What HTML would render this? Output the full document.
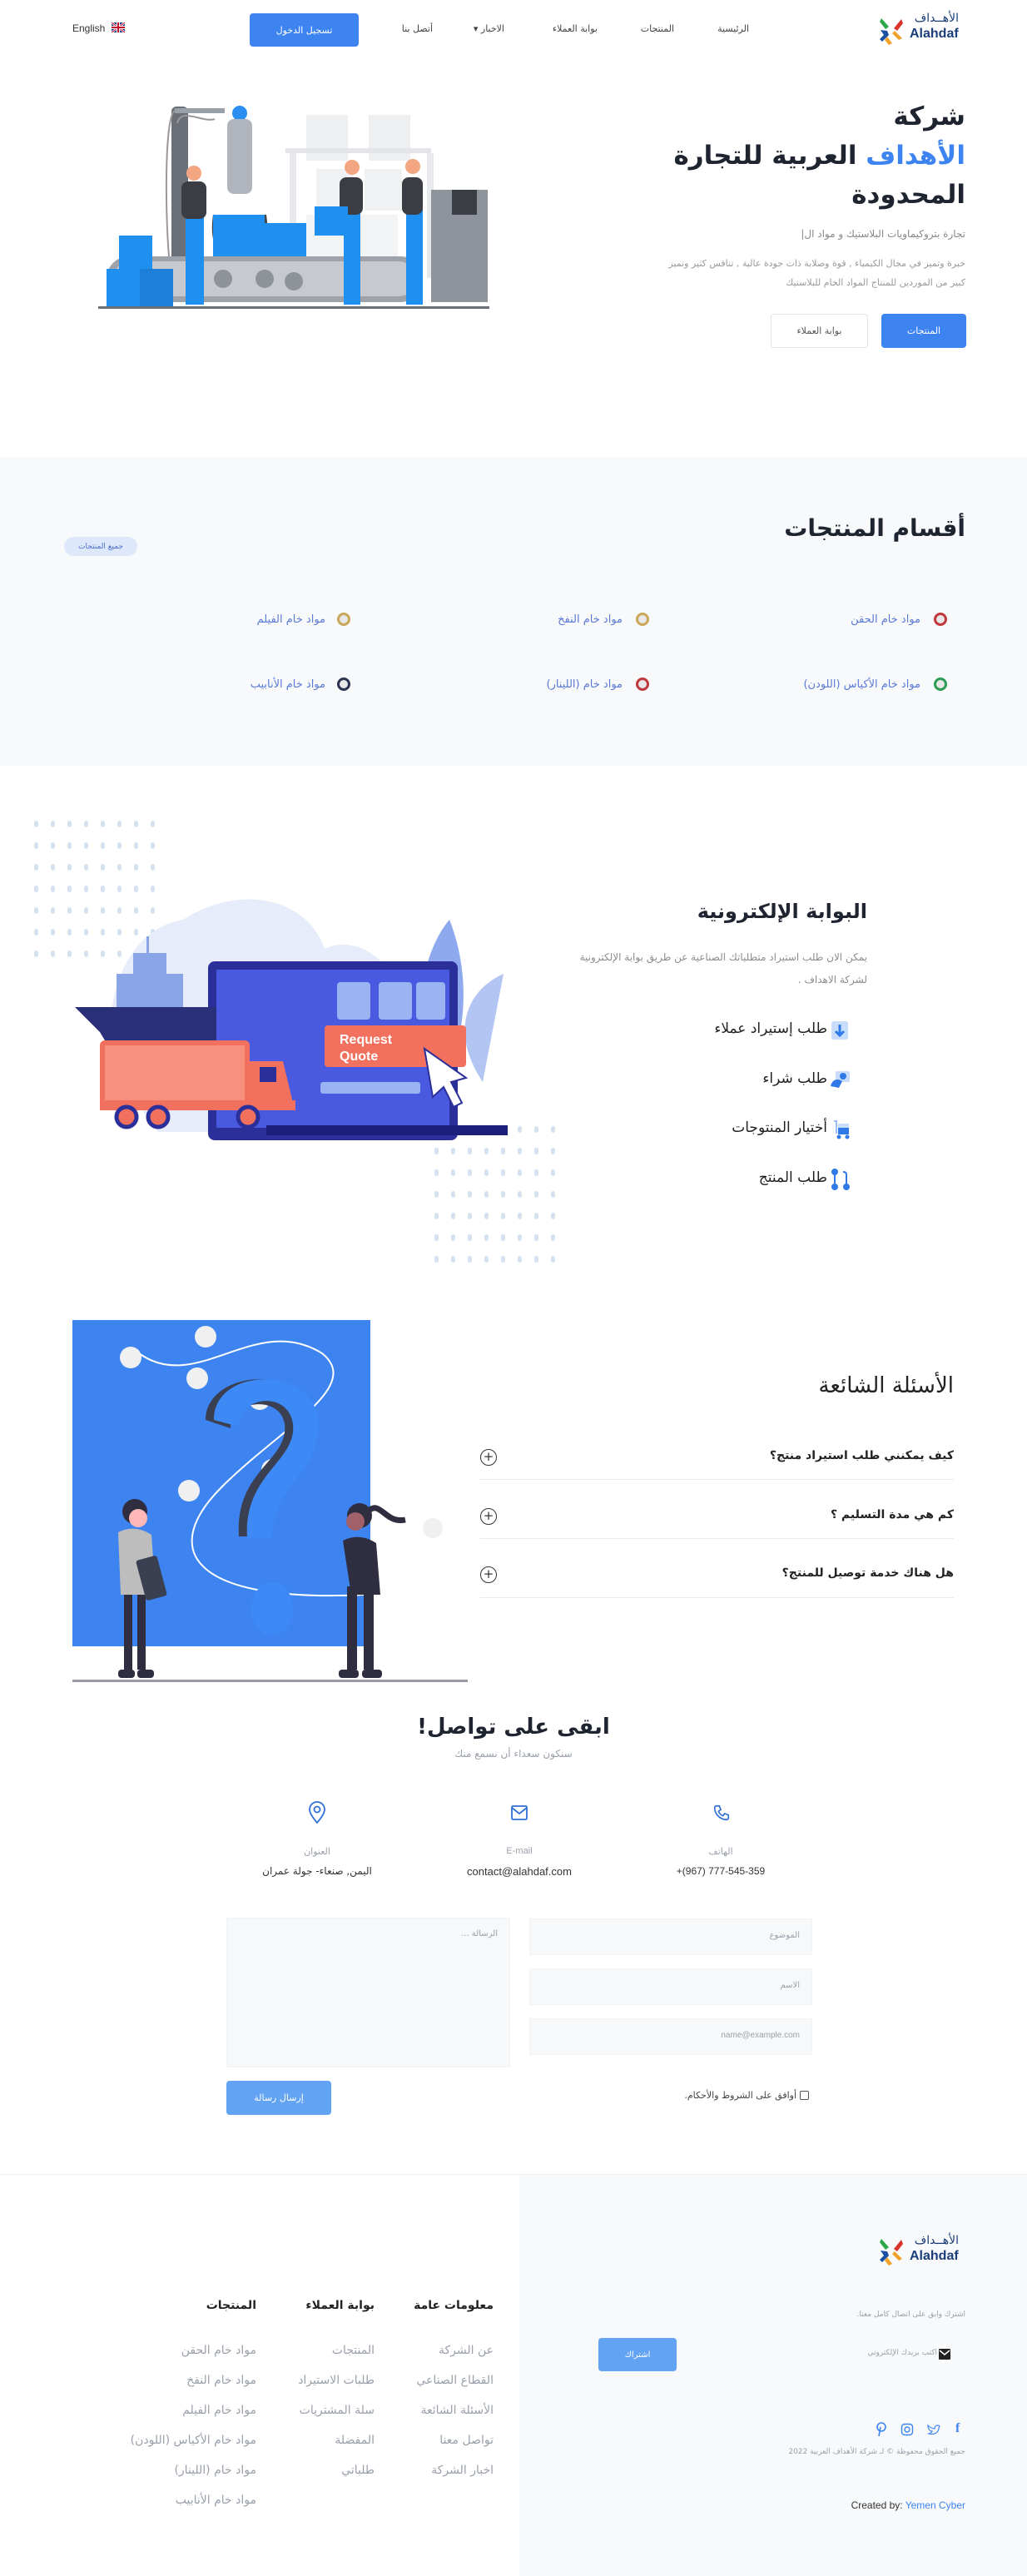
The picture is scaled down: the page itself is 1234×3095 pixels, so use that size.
<!DOCTYPE html>
<html lang="ar">
<head>
<meta charset="utf-8">
<style>
*{margin:0;padding:0;box-sizing:border-box}
html,body{width:1234px;height:3095px;background:#fff;overflow:hidden}
body{position:relative;font-family:"DejaVu Sans","Liberation Sans",sans-serif;color:#1f2533}
.a{position:absolute;white-space:nowrap}
.r{direction:rtl;text-align:right}
.c{text-align:center}
.btn{position:absolute;border-radius:4px;color:#fff;font-size:11px;display:flex;align-items:center;justify-content:center;direction:rtl}
.blue{background:#3d84f0}
.nav{font-size:11px;color:#444;top:28px}
.cat{font-size:13px;color:#5b79d6;direction:rtl}
.dot{position:absolute;width:16px;height:16px;border-radius:50%;background:#e8e8e8;border:3px solid}
.q{font-size:14px;font-weight:bold;color:#222}
.hr{position:absolute;height:1px;background:#e9ecef;left:577px;width:569px}
.pl{position:absolute;width:20px;height:20px;border:1.6px solid #333;border-radius:50%;font-size:15px;line-height:16px;text-align:center;color:#333;left:577px}
.in{position:absolute;background:#f6f8f9;border:1px solid #f1f3f5}
.ph{font-size:10px;color:#9aa1ab}
.fh{font-size:14px;font-weight:bold;color:#222}
.fl{font-size:14px;color:#9aa0ab}
</style>
</head>
<body>

<!-- HEADER -->
<svg class="a" style="left:1056px;top:20px" width="30" height="34" viewBox="0 0 30 34">
<path d="M3 2 L12 12 L8 15 L1 6Z" fill="#2aa84a"/>
<path d="M27 3 L18 14 L22 17 L29 8Z" fill="#d8342c"/>
<path d="M2 16 L10 17 L12 22 L4 30 L1 27 L6 22Z" fill="#1b4fa3"/>
<path d="M16 20 L24 28 L28 26 L19 17Z" fill="#f0a22a"/>
<path d="M10 24 L16 32 L12 34 L7 28Z" fill="#f0a22a"/>
</svg>
<div class="a r" style="right:82px;top:14px;font-size:14px;color:#1b3d7a">الأهــداف</div>
<div class="a" style="left:1093px;top:32px;font-size:16px;font-weight:bold;color:#1b3d7a;font-family:'Liberation Sans',sans-serif">Alahdaf</div>

<div class="a nav r" style="right:334px">الرئيسية</div>
<div class="a nav r" style="right:424px">المنتجات</div>
<div class="a nav r" style="right:516px">بوابة العملاء</div>
<div class="a nav r" style="right:628px">الاخبار ▾</div>
<div class="a nav r" style="right:714px">أتصل بنا</div>
<div class="btn blue" style="left:300px;top:16px;width:131px;height:40px">تسجيل الدخول</div>
<div class="a" style="left:87px;top:27px;font-size:12px;color:#333;font-family:'Liberation Sans',sans-serif">English</div>
<svg class="a" style="left:134px;top:27px" width="16" height="12" viewBox="0 0 16 12"><rect width="16" height="12" fill="#1a3a8a"/><path d="M0 0L16 12M16 0L0 12" stroke="#fff" stroke-width="2.5"/><path d="M0 0L16 12M16 0L0 12" stroke="#c8102e" stroke-width="1"/><path d="M8 0V12M0 6H16" stroke="#fff" stroke-width="4"/><path d="M8 0V12M0 6H16" stroke="#c8102e" stroke-width="2"/></svg>

<!-- HERO -->
<div class="a r" style="right:74px;top:117px;font-size:31px;font-weight:bold;line-height:47px;color:#1e2430">شركة<br><span style="color:#3d84f0">الأهداف</span> العربية للتجارة<br>المحدودة</div>
<div class="a r" style="right:74px;top:274px;font-size:12px;color:#888">تجارة بتروكيماويات البلاستيك و مواد ال|</div>
<div class="a r" style="right:74px;top:305px;font-size:11px;line-height:23px;color:#9a9a9a">خبرة وتميز في مجال الكيمياء , قوة وصلابة ذات جودة عالية , تنافس كثير وتميز<br>كبير من الموردين للمنتاج المواد الخام للبلاستيك</div>
<div class="btn blue" style="left:1059px;top:377px;width:102px;height:41px">المنتجات</div>
<div class="btn" style="left:926px;top:377px;width:117px;height:41px;border:1px solid #e3e3e3;color:#555">بوابة العملاء</div>

<svg class="a" style="left:118px;top:118px" width="470" height="255" viewBox="0 0 470 255">
<rect x="250" y="20" width="50" height="55" fill="#eeeff1"/><rect x="325" y="20" width="50" height="55" fill="#eeeff1"/>
<rect x="225" y="60" width="175" height="6" fill="#e4e5e8"/><rect x="230" y="66" width="8" height="150" fill="#e8e9ec"/><rect x="395" y="66" width="8" height="150" fill="#e8e9ec"/>
<rect x="262" y="85" width="45" height="50" fill="#f0f1f3"/><rect x="320" y="85" width="45" height="50" fill="#f0f1f3"/><rect x="250" y="140" width="110" height="50" fill="#f2f3f5"/>
<rect x="88" y="10" width="20" height="230" rx="6" fill="#6b6f78"/><path d="M93 15 C80 15 80 130 85 190 M95 30 C100 10 125 30 140 25" stroke="#999" fill="none" stroke-width="2"/>
<rect x="92" y="12" width="60" height="6" fill="#9aa0a8"/>
<circle cx="170" cy="18" r="9" fill="#2a8ff0"/><rect x="155" y="25" width="30" height="90" rx="8" fill="#b0b5bd"/>
<path d="M140 140 Q135 175 150 185 M200 140 Q205 175 190 185" stroke="#444" stroke-width="4" fill="none"/>
<rect x="138" y="140" width="62" height="60" fill="#1f8ff0"/>
<rect x="190" y="150" width="60" height="60" fill="#1f8ff0"/>
<rect x="400" y="110" width="68" height="135" fill="#8f949c"/><rect x="425" y="110" width="30" height="30" fill="#3a3d44"/>
<rect x="10" y="190" width="380" height="55" rx="27" fill="#9ea3ab"/><rect x="18" y="196" width="364" height="42" rx="21" fill="#c6c9ce"/>
<g fill="#8e9299"><circle cx="150" cy="217" r="11"/><circle cx="200" cy="217" r="11"/><circle cx="235" cy="220" r="11"/></g>
<rect x="0" y="250" width="470" height="3" fill="#6b6f78"/>
<rect x="10" y="205" width="40" height="45" fill="#1f8ff0"/><rect x="50" y="205" width="40" height="45" fill="#1c7fd9"/><rect x="25" y="165" width="40" height="40" fill="#1f8ff0"/>
<g fill="#1f8ff0"><rect x="105" y="140" width="22" height="108"/><rect x="295" y="130" width="20" height="118"/><rect x="370" y="130" width="20" height="118"/></g>
<g fill="#3a3d44"><rect x="100" y="100" width="30" height="45" rx="8"/><rect x="290" y="95" width="28" height="45" rx="8"/><rect x="365" y="95" width="25" height="45" rx="8"/></g>
<g fill="#f4a582"><circle cx="115" cy="90" r="9"/><circle cx="305" cy="83" r="9"/><circle cx="378" cy="82" r="9"/></g>
<rect x="260" y="130" width="40" height="35" fill="#1f8ff0"/>
</svg>

<!-- CATEGORIES -->
<div class="a" style="left:0;top:549px;width:1234px;height:371px;background:#f7f9fa"></div>
<div class="a r" style="right:74px;top:618px;font-size:28px;font-weight:bold;color:#1e2430">أقسام المنتجات</div>
<div class="a" style="left:77px;top:645px;width:88px;height:23px;border-radius:12px;background:#dde9fb;color:#4a6ccb;font-size:9px;display:flex;align-items:center;justify-content:center;direction:rtl">جميع المنتجات</div>

<div class="dot" style="left:1122px;top:736px;border-color:#c0393f"></div>
<div class="a cat" style="right:128px;top:737px">مواد خام الحقن</div>
<div class="dot" style="left:764px;top:736px;border-color:#c9a85a"></div>
<div class="a cat" style="right:486px;top:737px">مواد خام النفخ</div>
<div class="dot" style="left:405px;top:736px;border-color:#c9a85a"></div>
<div class="a cat" style="right:843px;top:737px">مواد خام الفيلم</div>
<div class="dot" style="left:1122px;top:814px;border-color:#2f9a52"></div>
<div class="a cat" style="right:128px;top:815px">مواد خام الأكياس (اللودن)</div>
<div class="dot" style="left:764px;top:814px;border-color:#c0393f"></div>
<div class="a cat" style="right:486px;top:815px">مواد خام (اللينار)</div>
<div class="dot" style="left:405px;top:814px;border-color:#2b3350"></div>
<div class="a cat" style="right:843px;top:815px">مواد خام الأنابيب</div>

<!-- PORTAL -->
<svg class="a" style="left:40px;top:985px" width="160" height="165">
<defs><pattern id="dp" width="20" height="26" patternUnits="userSpaceOnUse"><rect x="1" y="1" width="5" height="8" rx="2.5" fill="#d6e2ef"/></pattern></defs>
<rect width="160" height="165" fill="url(#dp)"/>
</svg>
<svg class="a" style="left:521px;top:1352px" width="150" height="165"><rect width="150" height="165" fill="url(#dp)"/></svg>

<svg class="a" style="left:90px;top:1060px" width="520" height="320" viewBox="0 0 520 320">
<path d="M70 260 C20 200 40 60 130 45 C200 0 280 20 300 80 C340 60 400 100 390 170 C420 230 370 290 300 300 L100 300Z" fill="#e7ecfa"/>
<path d="M450 45 C420 80 400 160 420 260 C470 220 480 120 450 45Z" fill="#8ea9ee"/>
<path d="M490 240 C450 180 470 130 515 110 Z" fill="#b3c5f3"/>
<rect x="160" y="95" width="300" height="215" rx="8" fill="#2a2f9a"/>
<rect x="170" y="105" width="280" height="190" fill="#4a5ae0"/>
<rect x="315" y="120" width="40" height="45" rx="4" fill="#9bb3f3"/><rect x="365" y="120" width="40" height="45" rx="4" fill="#9bb3f3"/><rect x="410" y="120" width="35" height="45" rx="4" fill="#9bb3f3"/>
<rect x="300" y="172" width="170" height="50" rx="4" fill="#f2705e"/>
<text x="318" y="194" font-family="Liberation Sans" font-weight="bold" font-size="16" fill="#fff">Request</text>
<text x="318" y="214" font-family="Liberation Sans" font-weight="bold" font-size="16" fill="#fff">Quote</text>
<path d="M420 200 L470 235 L452 240 L465 265 L455 270 L443 246 L430 258Z" fill="#fff" stroke="#2a2f9a" stroke-width="2"/>
<rect x="295" y="240" width="120" height="14" rx="3" fill="#9bb3f3"/>
<rect x="230" y="292" width="290" height="12" fill="#1c1f7a"/>
<path d="M0 150 L170 150 L170 230 L60 230 L30 180Z" fill="#2a2f7a"/>
<rect x="50" y="110" width="80" height="40" fill="#8aa4e8"/><rect x="70" y="85" width="40" height="25" fill="#8aa4e8"/><rect x="86" y="65" width="3" height="20" fill="#8aa4e8"/>
<rect x="30" y="190" width="180" height="80" rx="6" fill="#f2705e"/>
<rect x="36" y="196" width="168" height="70" fill="#f7917f"/>
<path d="M210 215 L250 215 L262 265 L210 265Z" fill="#f2705e"/><rect x="222" y="222" width="20" height="18" fill="#2a2f9a"/>
<rect x="30" y="262" width="235" height="12" fill="#f2705e"/>
<g fill="#f2705e" stroke="#2a2f9a" stroke-width="5"><circle cx="62" cy="282" r="12"/><circle cx="100" cy="282" r="12"/><circle cx="208" cy="282" r="12"/></g>
</svg>

<div class="a r" style="right:192px;top:1081px;font-size:24px;font-weight:bold;color:#1e2430">البوابة الإلكترونية</div>
<div class="a r" style="right:192px;top:1137px;font-size:12px;line-height:27px;color:#8d8d8d">يمكن الان طلب استيراد متطلباتك الصناعية عن طريق بوابة الإلكترونية<br>لشركة الاهداف .</div>

<svg class="a" style="left:998px;top:1226px" width="22" height="24"><rect x="1" y="1" width="20" height="22" rx="3" fill="#c8dcfb"/><path d="M11 5V17M6 13L11 18L16 13" stroke="#2f7ae8" stroke-width="3" fill="none"/></svg>
<div class="a r" style="right:240px;top:1226px;font-size:17px;color:#222">طلب إستيراد عملاء</div>
<svg class="a" style="left:996px;top:1285px" width="26" height="24"><rect x="8" y="2" width="17" height="13" rx="2" fill="#c8dcfb"/><circle cx="17" cy="8" r="4" fill="#2f7ae8"/><path d="M2 20 C4 12 10 10 16 14 L12 22Z" fill="#2f7ae8"/></svg>
<div class="a r" style="right:240px;top:1286px;font-size:17px;color:#222">طلب شراء</div>
<svg class="a" style="left:1000px;top:1344px" width="22" height="26"><path d="M2 3 L5 3 L5 18" stroke="#9bbdf6" stroke-width="2" fill="none"/><rect x="7" y="6" width="13" height="6" fill="#c8dcfb"/><rect x="7" y="11" width="13" height="8" fill="#2f7ae8"/><circle cx="8" cy="22" r="2.5" fill="#2f7ae8"/><circle cx="18" cy="22" r="2.5" fill="#2f7ae8"/></svg>
<div class="a r" style="right:240px;top:1345px;font-size:17px;color:#222">أختيار المنتوجات</div>
<svg class="a" style="left:998px;top:1403px" width="24" height="28"><circle cx="5" cy="5" r="4" fill="#2f7ae8"/><circle cx="5" cy="23" r="4" fill="#2f7ae8"/><circle cx="19" cy="23" r="4" fill="#2f7ae8"/><path d="M5 5V23M19 23V8 Q19 5 15 5" stroke="#2f7ae8" stroke-width="2" fill="none"/></svg>
<div class="a r" style="right:240px;top:1405px;font-size:17px;color:#222">طلب المنتج</div>

<!-- FAQ -->
<svg class="a" style="left:87px;top:1586px" width="475" height="440" viewBox="0 0 475 440">
<rect x="0" y="0" width="358" height="392" fill="#3d84f0"/>
<path d="M80 40 C150 90 220 -10 300 40 C350 80 250 130 180 200 C100 280 150 340 350 330 C420 320 420 260 390 250" stroke="#fff" stroke-width="2" fill="none"/>
<g fill="#f0f0f0"><circle cx="70" cy="45" r="13"/><circle cx="160" cy="20" r="13"/><circle cx="150" cy="70" r="13"/><circle cx="225" cy="95" r="13"/><circle cx="240" cy="180" r="13"/><circle cx="140" cy="205" r="13"/><circle cx="433" cy="250" r="12"/></g>
<path d="M160 120 C160 60 280 50 290 120 C300 180 230 190 230 260 L200 260 C195 180 260 170 255 125 C250 90 190 95 190 130Z" fill="#3a3f52"/>
<path d="M170 120 C170 55 290 55 295 120 C300 185 240 195 240 262 L210 262 C205 185 270 170 265 125 C260 85 200 90 200 128Z" fill="#3d8af7"/>
<ellipse cx="240" cy="347" rx="25" ry="32" fill="#3d8af7"/>
<rect x="0" y="432" width="475" height="3" fill="#9a9ca5"/>
<g fill="#2f2e41"><circle cx="75" cy="230" r="15"/><rect x="62" y="320" width="10" height="100"/><rect x="78" y="320" width="10" height="100"/><rect x="55" y="420" width="20" height="10" rx="4"/><rect x="78" y="420" width="20" height="10" rx="4"/></g>
<circle cx="79" cy="238" r="11" fill="#ffb8b8"/>
<path d="M55 255 Q75 245 95 258 L100 330 L58 330Z" fill="#bdbdbd"/>
<rect x="82" y="285" width="26" height="50" rx="3" fill="#3a3f52" transform="rotate(-15 95 310)"/>
<g fill="#2f2e41"><circle cx="345" cy="235" r="15"/><path d="M355 230 C370 215 375 245 400 240" stroke="#2f2e41" stroke-width="7" fill="none"/><path d="M325 265 Q345 255 365 268 L370 330 L335 330Z"/><rect x="330" y="320" width="12" height="100"/><rect x="350" y="320" width="12" height="100"/><rect x="320" y="420" width="24" height="10" rx="4"/><rect x="348" y="420" width="24" height="10" rx="4"/></g>
<circle cx="340" cy="242" r="11" fill="#a0616a"/>
</svg>

<div class="a r" style="right:88px;top:1650px;font-size:26px;color:#222">الأسئلة الشائعة</div>
<div class="a r q" style="right:88px;top:1741px">كيف يمكنني طلب استيراد منتج؟</div>
<div class="pl" style="top:1741px">+</div>
<div class="hr" style="top:1777px"></div>
<div class="a r q" style="right:88px;top:1812px">كم هي مدة التسليم ؟</div>
<div class="pl" style="top:1812px">+</div>
<div class="hr" style="top:1848px"></div>
<div class="a r q" style="right:88px;top:1882px">هل هناك خدمة توصيل للمنتج؟</div>
<div class="pl" style="top:1882px">+</div>
<div class="hr" style="top:1919px"></div>

<!-- CONTACT -->
<div class="a c" style="left:0;width:1234px;top:2060px;font-size:26px;font-weight:bold;color:#1e2430;direction:rtl">ابقى على تواصل!</div>
<div class="a c" style="left:0;width:1234px;top:2100px;font-size:12px;color:#9aa0ab;direction:rtl">سنكون سعداء أن نسمع منك</div>

<svg class="a" style="left:856px;top:2166px" width="22" height="24" viewBox="0 0 24 24"><path d="M5 3 L9 3 L11 8 L8 10 C9 13 11 15 14 16 L16 13 L21 15 L21 19 C21 20 20 21 19 21 C10 21 3 14 3 5 C3 4 4 3 5 3Z" stroke="#2f6fd6" stroke-width="1.8" fill="none"/></svg>
<svg class="a" style="left:612px;top:2166px" width="24" height="24" viewBox="0 0 24 24"><rect x="3" y="4" width="18" height="16" rx="1.5" stroke="#2f6fd6" stroke-width="1.8" fill="none"/><path d="M3 6 L12 13 L21 6" stroke="#2f6fd6" stroke-width="1.8" fill="none"/></svg>
<svg class="a" style="left:369px;top:2164px" width="24" height="28" viewBox="0 0 24 28"><path d="M12 26 C6 19 3 14 3 10 A9 9 0 0 1 21 10 C21 14 18 19 12 26Z" stroke="#2f6fd6" stroke-width="1.8" fill="none"/><circle cx="12" cy="10" r="3.5" stroke="#2f6fd6" stroke-width="1.8" fill="none"/></svg>

<div class="a c" style="left:766px;width:200px;top:2218px;font-size:11px;color:#9aa0ab">الهاتف</div>
<div class="a c" style="left:766px;width:200px;top:2241px;font-size:12px;color:#333;font-family:'Liberation Sans',sans-serif">+(967) 777-545-359</div>
<div class="a c" style="left:524px;width:200px;top:2218px;font-size:11px;color:#9aa0ab;font-family:'Liberation Sans',sans-serif">E-mail</div>
<div class="a c" style="left:524px;width:200px;top:2241px;font-size:13px;color:#333;font-family:'Liberation Sans',sans-serif">contact@alahdaf.com</div>
<div class="a c" style="left:281px;width:200px;top:2218px;font-size:11px;color:#9aa0ab">العنوان</div>
<div class="a c" style="left:281px;width:200px;top:2241px;font-size:12px;color:#333;direction:rtl">اليمن, صنعاء- جولة عمران</div>

<div class="in" style="left:272px;top:2304px;width:341px;height:180px"></div>
<div class="a r ph" style="right:636px;top:2318px">الرسالة ...</div>
<div class="in" style="left:636px;top:2305px;width:340px;height:44px"></div>
<div class="a r ph" style="right:273px;top:2320px">الموضوع</div>
<div class="in" style="left:636px;top:2365px;width:340px;height:44px"></div>
<div class="a r ph" style="right:273px;top:2380px">الاسم</div>
<div class="in" style="left:636px;top:2425px;width:340px;height:44px"></div>
<div class="a ph" style="right:273px;top:2440px;font-family:'Liberation Sans',sans-serif">name@example.com</div>
<div class="btn" style="left:272px;top:2500px;width:126px;height:41px;background:#62a3f3">إرسال رسالة</div>
<div class="a" style="left:961px;top:2512px;width:11px;height:11px;border:1px solid #555;border-radius:2px"></div>
<div class="a r" style="right:277px;top:2511px;font-size:11px;color:#444">أوافق على الشروط والأحكام.</div>

<!-- FOOTER -->
<div class="a" style="left:0;top:2612px;width:1234px;height:1px;background:#eef0f2"></div>
<div class="a" style="left:624px;top:2613px;width:610px;height:482px;background:#f7f9fa"></div>
<svg class="a" style="left:1056px;top:2688px" width="30" height="34" viewBox="0 0 30 34">
<path d="M3 2 L12 12 L8 15 L1 6Z" fill="#2aa84a"/><path d="M27 3 L18 14 L22 17 L29 8Z" fill="#d8342c"/>
<path d="M2 16 L10 17 L12 22 L4 30 L1 27 L6 22Z" fill="#1b4fa3"/><path d="M16 20 L24 28 L28 26 L19 17Z" fill="#f0a22a"/><path d="M10 24 L16 32 L12 34 L7 28Z" fill="#f0a22a"/>
</svg>
<div class="a r" style="right:82px;top:2684px;font-size:14px;color:#1b3d7a">الأهــداف</div>
<div class="a" style="left:1093px;top:2702px;font-size:16px;font-weight:bold;color:#1b3d7a;font-family:'Liberation Sans',sans-serif">Alahdaf</div>
<div class="a r" style="right:74px;top:2776px;font-size:9px;color:#9aa0ab">اشترك وابق على اتصال كامل معنا.</div>
<svg class="a" style="left:1128px;top:2822px" width="14" height="13"><rect width="14" height="13" rx="1" fill="#222"/><path d="M1 2 L7 7 L13 2" stroke="#fff" stroke-width="1.5" fill="none"/></svg>
<div class="a r" style="right:108px;top:2822px;font-size:9px;color:#9aa0ab">اكتب بريدك الإلكتروني</div>
<div class="btn" style="left:719px;top:2809px;width:94px;height:40px;background:#62a3f3;font-size:10px">اشتراك</div>
<div class="a" style="left:1148px;top:2909px;font-size:16px;font-weight:bold;color:#3d84f0;font-family:'Liberation Serif',serif">f</div>
<svg class="a" style="left:1114px;top:2911px" width="16" height="16" viewBox="0 0 16 16"><path d="M1 3 C4 6 7 7 9 7 C9 3 13 2 15 4 L14 6 C14 11 9 15 2 13 C5 12 6 11 6 10 C3 10 2 8 2 7 C1 6 1 5 1 3Z" stroke="#3d84f0" stroke-width="1.2" fill="none"/></svg>
<svg class="a" style="left:1082px;top:2911px" width="16" height="16"><rect x="1.5" y="1.5" width="13" height="13" rx="3.5" stroke="#3d84f0" stroke-width="1.4" fill="none"/><circle cx="8" cy="8" r="3" stroke="#3d84f0" stroke-width="1.4" fill="none"/></svg>
<svg class="a" style="left:1052px;top:2910px" width="14" height="18"><circle cx="7" cy="6" r="5" stroke="#3d84f0" stroke-width="1.6" fill="none"/><path d="M6 6 L4 17" stroke="#3d84f0" stroke-width="1.6"/></svg>
<div class="a r" style="right:74px;top:2941px;font-size:9px;color:#9aa0ab">جميع الحقوق محفوظة © لـ شركة الأهداف العربية 2022</div>
<div class="a" style="right:74px;top:3003px;font-size:12px;color:#333;font-family:'Liberation Sans',sans-serif">Created by: <span style="color:#3d84f0">Yemen Cyber</span></div>

<div class="a r fh" style="right:641px;top:2762px">معلومات عامة</div>
<div class="a r fh" style="right:784px;top:2762px">بوابة العملاء</div>
<div class="a r fh" style="right:926px;top:2762px">المنتجات</div>

<div class="a r fl" style="right:641px;top:2806px;line-height:36px">عن الشركة<br>القطاع الصناعي<br>الأسئلة الشائعة<br>تواصل معنا<br>اخبار الشركة</div>
<div class="a r fl" style="right:784px;top:2806px;line-height:36px">المنتجات<br>طلبات الاستيراد<br>سلة المشتريات<br>المفضلة<br>طلباتي</div>
<div class="a r fl" style="right:926px;top:2806px;line-height:36px">مواد خام الحقن<br>مواد خام النفخ<br>مواد خام الفيلم<br>مواد خام الأكياس (اللودن)<br>مواد خام (اللينار)<br>مواد خام الأنابيب</div>

</body>
</html>
